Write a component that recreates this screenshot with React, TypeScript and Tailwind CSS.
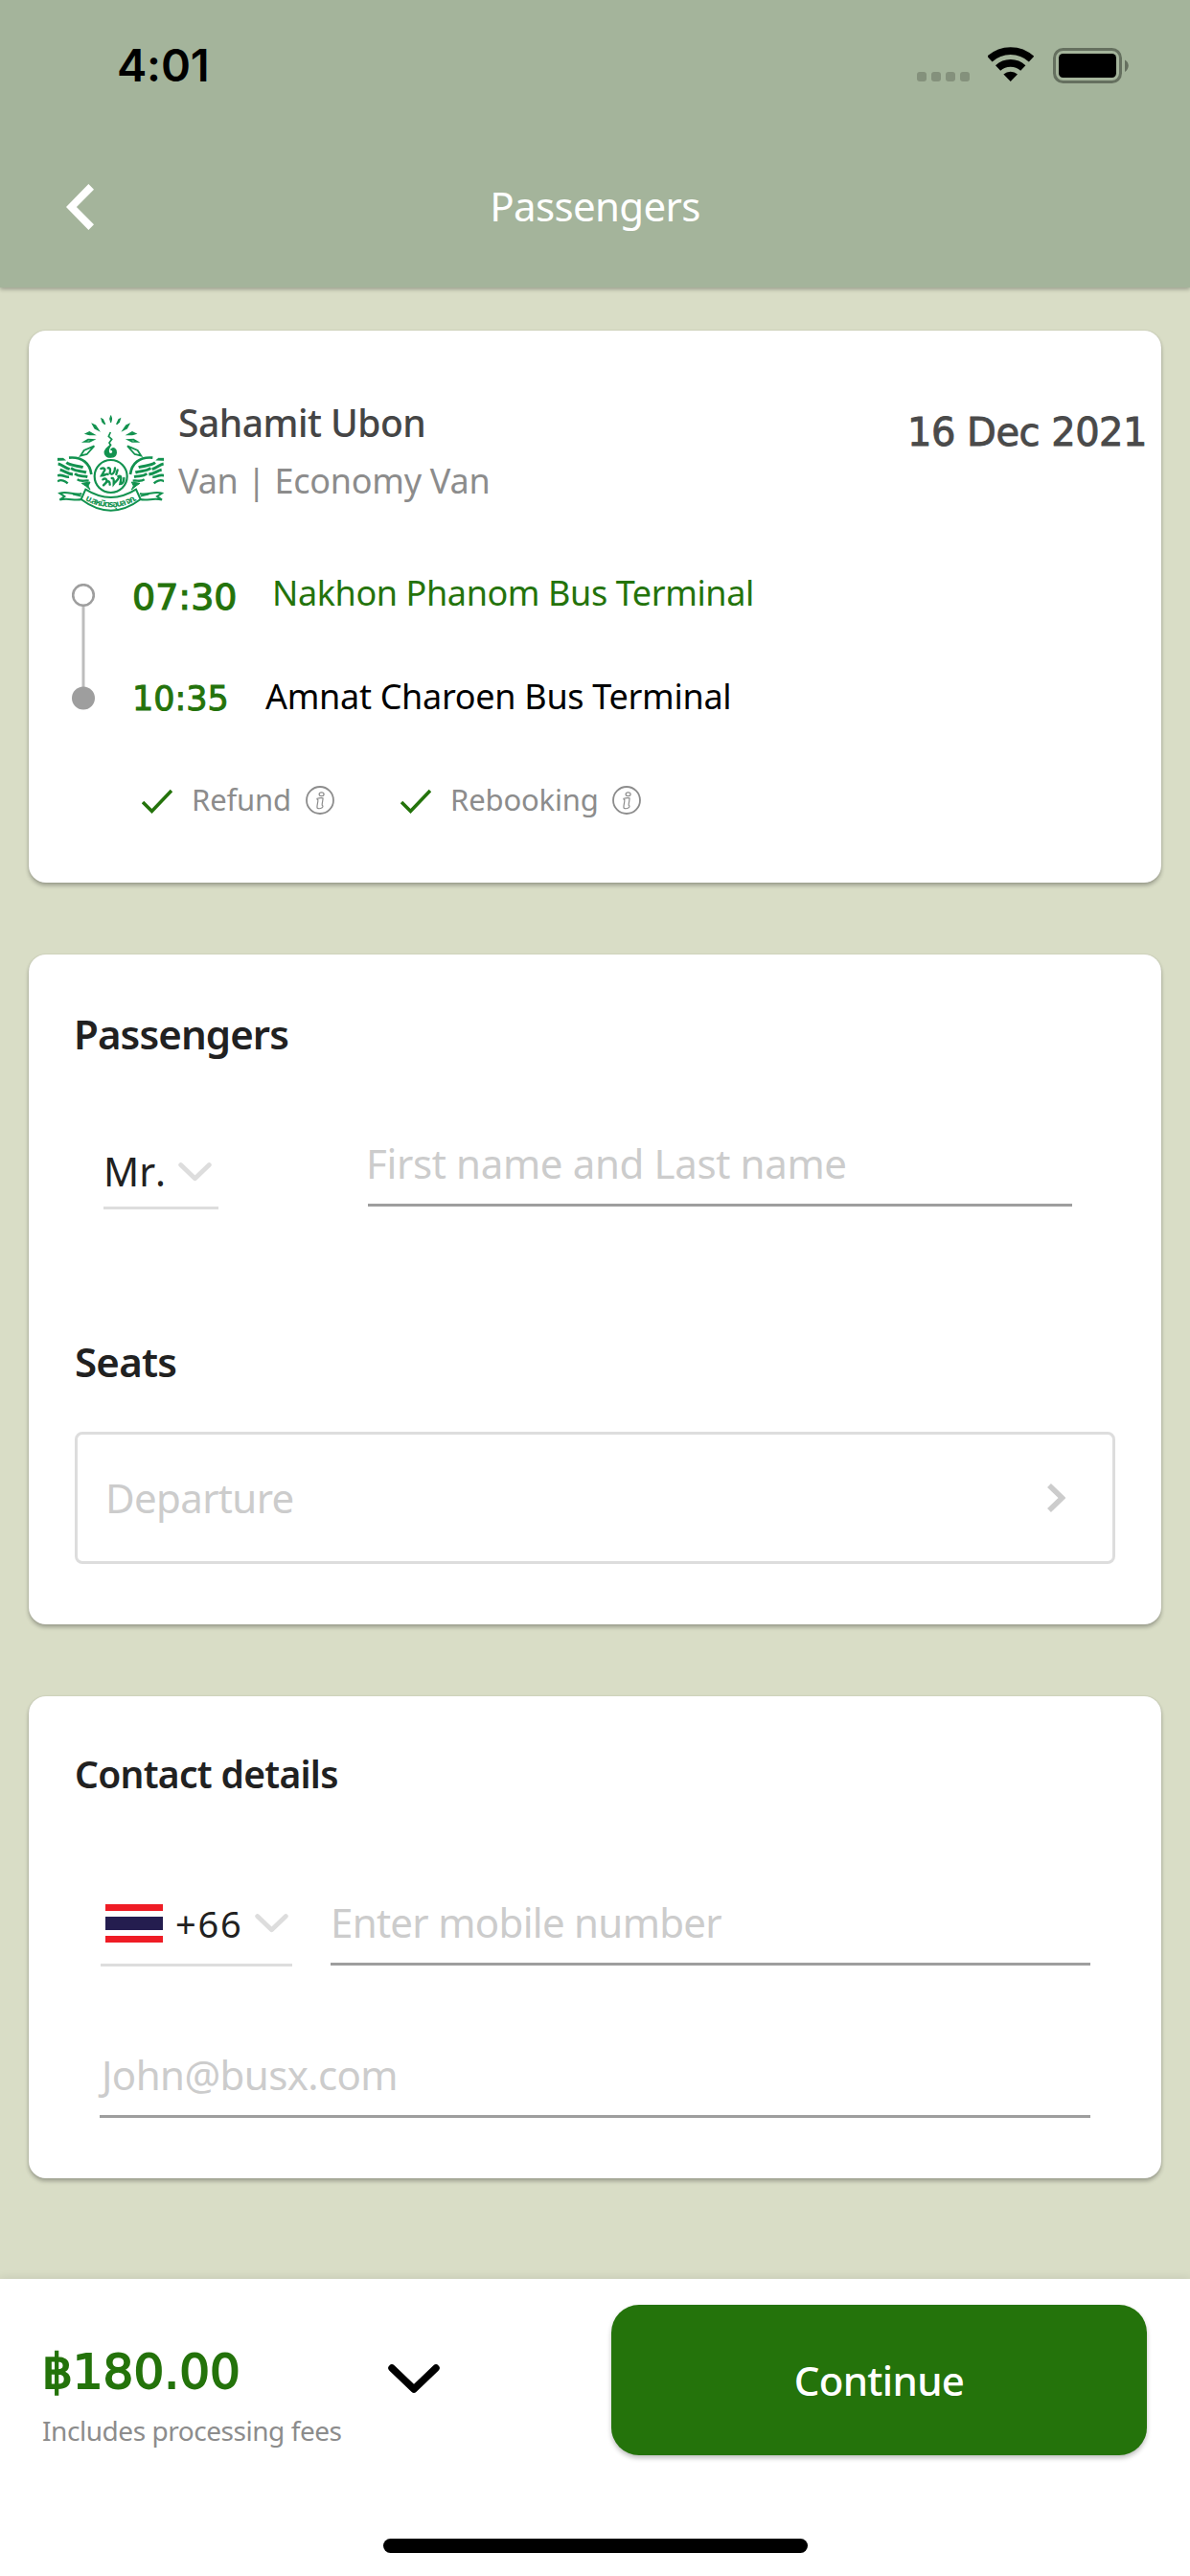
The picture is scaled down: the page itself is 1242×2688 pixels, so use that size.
import type { ReactNode } from 'react'

const ChevronDown = ({ className }: { className: string }) => (
  <svg viewBox="0 0 54 31" fill="none" stroke="currentColor" strokeLinecap="round" strokeLinejoin="round" className={className}>
    <path d="M4 4 L27 26 L50 4" strokeWidth="7.5" />
  </svg>
)

const CheckIcon = ({ className = '' }: { className?: string }) => (
  <svg viewBox="0 0 32 27" fill="none" className={`w-8 h-[27px] mt-1 ${className}`}>
    <path d="M1 14 L10.5 23.5 L31 2" stroke="#24730b" strokeWidth="3.6" />
  </svg>
)

const InfoIcon = () => (
  <svg viewBox="0 0 30 30" fill="none" stroke="#8c8c8c" className="w-[30px] h-[30px] mt-0.5">
    <circle cx="15" cy="15" r="14" strokeWidth="1.8" />
    <ellipse cx="16.6" cy="8.8" rx="2.5" ry="1.9" strokeWidth="1.2" />
    <path
      d="M12 13.2 C14 12.6 16.5 12.4 18 12.8 C18.4 14 17 18 17.2 20.2 C18 20.6 18.2 21.4 17.6 22.4 C15.6 23.8 13 23.8 12 23 C11.4 20.6 13.2 17.4 12.8 14.6 C12.2 14.6 11.8 14 12 13.2Z"
      strokeWidth="1.2"
    />
  </svg>
)

const LogoWing = () => (
  <g>
    <path d="M30 189 L48 189 L56 196 L30 197Z" fill="#12924f" />
    <path d="M66 188 C108 184 132 206 136 240" strokeWidth="8" />
    <path d="M58 203 C72 214 92 212 110 218" strokeWidth="9" />
    <path d="M72 220 C88 232 104 228 120 234" strokeWidth="9" />
    <path d="M84 238 C96 248 108 244 124 248" strokeWidth="8" />
    <path d="M92 256 C104 264 114 258 128 260" strokeWidth="7" />
    <path d="M32 207 C44 209 54 220 68 224" strokeWidth="9" />
    <path d="M38 226 C50 228 62 238 78 240" strokeWidth="9" />
    <path d="M30 244 C44 238 54 250 66 248" strokeWidth="8" />
    <path d="M30 262 C42 254 56 262 62 268" strokeWidth="7" />
    <path d="M106 268 L132 264 L126 276 L132 288 L118 276Z" fill="#12924f" strokeWidth="3" />
    {/* rays */}
    <path d="M168 66 L172 68 L179 83 L171 76Z" fill="#12924f" strokeWidth="4" />
    <path d="M140 83 L149 87 L159 102 L147 96Z" fill="#12924f" strokeWidth="4" />
    <path d="M119 113 L130 107 L145 116 L130 116Z" fill="#12924f" strokeWidth="4" />
    <path d="M114 138 L126 131 L142 132 L130 138Z" strokeWidth="5" />
    <path d="M102 182 L113 165 L145 151 L122 177Z" strokeWidth="5.5" />
    {/* ribbon tail */}
    <path d="M106 300 C84 308 62 290 37 299 L52 309 L37 320 C62 312 82 324 106 318" strokeWidth="6" />
    <path d="M78 302 L104 308" strokeWidth="5" />
  </g>
)

const OperatorLogo = () => (
  <svg viewBox="30 36 333 324" fill="none" stroke="#12924f" className="w-[111px] h-[108px] mt-[11px] shrink-0">
    <LogoWing />
    <g transform="translate(394 0) scale(-1 1)">
      <LogoWing />
    </g>
    <path d="M197 56 L200 66 L197 78 L194 66Z" fill="#12924f" strokeWidth="3" />
    <path d="M196 108 L190 121 L200 130 L192 141 L197 150" strokeWidth="5" />
    <path
      d="M198 146 C186 156 176 164 178 174 C182 190 212 192 214 172 C215 160 204 154 198 162 C206 164 206 176 196 176 C186 174 188 162 198 146Z"
      fill="#12924f"
      strokeWidth="4"
    />
    <circle cx="197" cy="246" r="51" strokeWidth="6.5" />
    <path
      d="M166 222 C176 218 182 224 176 230 L168 244 C180 244 184 236 188 240 M188 220 C196 218 196 226 194 236 C200 244 210 236 210 220 M172 256 C180 250 188 256 182 266 L174 274 M182 266 C190 258 194 262 194 272 M200 252 C208 250 206 262 206 270 C212 262 220 258 222 250 M218 226 L214 240 M220 246 C234 240 228 262 226 270 C236 270 238 262 238 252"
      strokeWidth="7"
      strokeLinecap="round"
    />
    <path d="M118 287 Q197 337 276 287 L290 318 Q197 388 104 318Z" fill="#fff" strokeWidth="6" />
    <path id="ribbon" d="M108 315 Q197 371 288 315" stroke="none" />
    <text fill="#12924f" stroke="none" className="font-['Noto_Sans_Thai','Noto_Sans',sans-serif] text-[28px] font-bold">
      <textPath href="#ribbon" startOffset="50%" textAnchor="middle" textLength="172">
        บ.สหมิตรอุบล จก.
      </textPath>
    </text>
  </svg>
)

const ThaiFlag = () => (
  <div className="w-[60px] h-10 ml-[5px] flex flex-col justify-between bg-white">
    <div className="h-[7px] bg-[#ef1c25]" />
    <div className="h-[14px] bg-[#241d4f]" />
    <div className="h-[7px] bg-[#ef1c25]" />
  </div>
)

const StatusBar = () => (
  <div className="h-[130px] pl-[122px] pr-16 flex justify-between items-start">
    <span className="mt-[38px] font-['Inter',sans-serif] text-[47px] leading-[60px] font-semibold tracking-[-0.2px] text-black">4:01</span>
    <div className="mt-[49px] flex items-end">
      <div className="flex gap-[5px] mb-0.5">
        {[0, 1, 2, 3].map((i) => (
          <div key={i} className="w-2.5 h-2.5 rounded-[3px] bg-[#84917c]" />
        ))}
      </div>
      <svg viewBox="0 0 48 37" fill="none" stroke="#000" className="w-12 h-[37px] ml-[19px] mb-px">
        <path d="M1.9 12.6 A32 32 0 0 1 45.5 12.6" strokeWidth="7.8" />
        <path d="M10.6 22 A19.2 19.2 0 0 1 36.8 22" strokeWidth="7.6" />
        <path d="M23.7 36 L16.4 28.4 A11 11 0 0 1 31 28.4Z" fill="#000" stroke="none" />
      </svg>
      <svg viewBox="0 0 79 37" className="w-[79px] h-[37px] ml-5">
        <rect x="1.5" y="1.5" width="69" height="34" rx="9" fill="none" stroke="#65705f" strokeWidth="3" />
        <rect x="6" y="6" width="60" height="25" rx="4.5" />
        <path d="M75 12.5 C80 15 80 22 75 25Z" fill="#65705f" />
      </svg>
    </div>
  </div>
)

const Header = () => (
  <header className="relative z-10 h-[300px] bg-[#a4b49b] shadow-[0_2px_4px_rgba(0,0,0,0.28)]">
    <StatusBar />
    <div className="h-[170px] px-[69px] grid grid-cols-[1fr_auto_1fr] items-center">
      <svg viewBox="0 0 29 48" className="w-[29px] h-12 mt-0.5">
        <path d="M29 5.8 L10.9 24 L29 42.2 L23.4 48 L0 24 L23.4 0Z" fill="#fff" />
      </svg>
      <h1 className="text-[42px] leading-[60px] font-normal tracking-[-0.65px] text-white">Passengers</h1>
    </div>
  </header>
)

const Card = ({ className, children }: { className: string; children: ReactNode }) => (
  <section className={`bg-white rounded-[18px] shadow-[0_3px_4px_rgba(0,0,0,0.28),0_0_2px_rgba(0,0,0,0.12)] ${className}`}>{children}</section>
)

const TripCard = () => (
  <Card className="h-[576px] pt-[71px] pl-[30px] pr-[15px]">
    <div className="h-[119px] flex">
      <OperatorLogo />
      <div className="mt-px ml-[15px]">
        <h2 className="text-[39px] leading-[48px] font-medium tracking-[-0.5px] text-[#454545]">Sahamit Ubon</h2>
        <p className="mt-[13px] text-[36px] leading-[48px] tracking-[-0.25px] text-[#8c8c8c]">Van | Economy Van</p>
      </div>
      <p className="mt-[11px] ml-auto font-['DejaVu_Sans',sans-serif] text-[40px] leading-[48px] tracking-[-0.5px] text-[#4a4a4a] [-webkit-text-stroke:0.9px_#4a4a4a]">
        16 Dec 2021
      </p>
    </div>

    <div className="mt-[59px] pl-[15px] flex">
      <svg viewBox="0 0 24 133" className="w-6 h-[133px] mt-[15px]">
        <path d="M12 22 V110" stroke="#bdbdbd" strokeWidth="3" />
        <circle cx="12" cy="12" r="10.8" fill="#fff" stroke="#9e9e9e" strokeWidth="2.6" />
        <circle cx="12" cy="119.5" r="12" fill="#9e9e9e" />
      </svg>
      <div className="mt-px ml-[39px] space-y-[60px]">
        <div className="flex">
          <span className="w-[146px] mt-1 -mb-1 font-['DejaVu_Sans',sans-serif] text-[38px] leading-[48px] text-[#24730b] [-webkit-text-stroke:1.1px_#24730b]">07:30</span>
          <span className="text-[36px] leading-[48px] tracking-[-0.4px] text-[#24730b]">Nakhon Phanom Bus Terminal</span>
        </div>
        <div className="flex">
          <span className="w-[139px] mt-0.5 -mb-0.5 font-['DejaVu_Sans',sans-serif] text-[35px] leading-[48px] text-[#24730b] [-webkit-text-stroke:1px_#24730b]">10:35</span>
          <span className="text-[36px] leading-[48px] tracking-[-0.3px] text-black">Amnat Charoen Bus Terminal</span>
        </div>
      </div>
    </div>

    <div className="mt-[63px] pl-[88px] flex items-center text-[31px] leading-[40px] tracking-[-0.15px] text-[#8c8c8c]">
      <CheckIcon />
      <span className="w-[119px] ml-5">Refund</span>
      <InfoIcon />
      <CheckIcon className="ml-[69px]" />
      <span className="w-[169px] ml-5">Rebooking</span>
      <InfoIcon />
    </div>
  </Card>
)

const PassengersCard = () => (
  <Card className="h-[699px] mt-[75px] pt-[55px] px-12">
    <h2 className="-ml-px text-[42px] leading-[56px] font-semibold tracking-[-0.9px] text-[#212121]">Passengers</h2>
    <div className="h-[77px] mt-[78px] pl-[30px] flex items-start">
      <div className="w-[120px] h-[68px] mt-[9px] flex border-b-[3px] border-[#ddd]">
        <span className="w-[78px] text-[41px] leading-[56px] [font-kerning:none] text-[#212121]">Mr.</span>
        <ChevronDown className="w-[35px] h-5 mt-[19px] text-[#ddd]" />
      </div>
      <div className="w-[735px] h-[74px] pt-px ml-[156px] border-b-[3px] border-[#9e9e9e]">
        <span className="-ml-0.5 text-[42px] leading-[56px] tracking-[-0.35px] text-[#ccc]">First name and Last name</span>
      </div>
    </div>

    <h2 className="mt-[131px] text-[42px] leading-[56px] font-semibold tracking-[-0.75px] text-[#212121]">Seats</h2>
    <button className="w-[1086px] h-[138px] mt-[45px] pl-[29px] pr-[49px] flex items-center justify-between border-[3px] border-[#ddd] rounded-lg">
      <span className="text-[42px] leading-[56px] tracking-[-0.65px] text-[#ccc]">Departure</span>
      <svg viewBox="0 0 20 32" fill="none" className="w-5 h-8">
        <path d="M3 3 L16.5 16 L3 29" stroke="#ccc" strokeWidth="5.6" />
      </svg>
    </button>
  </Card>
)

const ContactCard = () => (
  <Card className="h-[503px] mt-[75px] pt-[53px] pl-12">
    <h2 className="text-[39px] leading-[56px] font-semibold tracking-[-0.7px] text-[#212121]">Contact details</h2>
    <div className="mt-[99px] pl-[27px] flex">
      <div className="w-[200px] h-[74px] pb-[13px] flex items-center border-b-[3px] border-[#ddd]">
        <ThaiFlag />
        <span className="w-[83px] ml-[13px] text-[38px] leading-[48px] tracking-[1.8px] text-[#212121]">+66</span>
        <ChevronDown className="w-[35px] h-5 text-[#ddd]" />
      </div>
      <div className="w-[793px] h-[73px] ml-10 border-b-[3px] border-[#9e9e9e]">
        <span className="text-[42px] leading-[56px] tracking-[-0.7px] text-[#ccc]">Enter mobile number</span>
      </div>
    </div>
    <div className="w-[1034px] h-[73px] mt-[85px] ml-[26px] border-b-[3px] border-[#9e9e9e]">
      <span className="pl-0.5 text-[42px] leading-[56px] tracking-[-0.6px] text-[#ccc]">John@busx.com</span>
    </div>
  </Card>
)

const Footer = () => (
  <footer className="h-[310px] flex flex-col bg-white shadow-[0_-2px_8px_rgba(0,0,0,0.08)]">
    <div className="h-[271px] pl-11 pr-[45px] flex items-start">
      <div className="w-[361px] pt-[67px]">
        <p className="font-['DejaVu_Sans',sans-serif] text-[50px] leading-[60px] text-[#24730b] [-webkit-text-stroke:1.8px_#24730b]">฿180.00</p>
        <p className="mt-[13px] text-[28px] leading-[36px] tracking-[-0.45px] text-[#8c8c8c]">Includes processing fees</p>
      </div>
      <ChevronDown className="w-[54px] h-[31px] mt-[89px] text-black" />
      <button className="w-[559px] h-[157px] mt-[27px] ml-auto rounded-[29px] bg-[#24730b] shadow-[0_3px_5px_rgba(0,0,0,0.25)] text-[42px] leading-[56px] font-medium tracking-[-0.65px] text-white">
        Continue
      </button>
    </div>
    <div className="w-[443px] h-[15px] mx-auto rounded-full bg-black" />
  </footer>
)

export default function App() {
  return (
    <div className="w-[1242px] h-[2688px] flex flex-col overflow-hidden bg-[#d9ddc6] font-['Noto_Sans','Open_Sans',sans-serif]">
      <Header />
      <main className="flex-1 px-[30px] pt-[45px]">
        <TripCard />
        <PassengersCard />
        <ContactCard />
      </main>
      <Footer />
    </div>
  )
}
